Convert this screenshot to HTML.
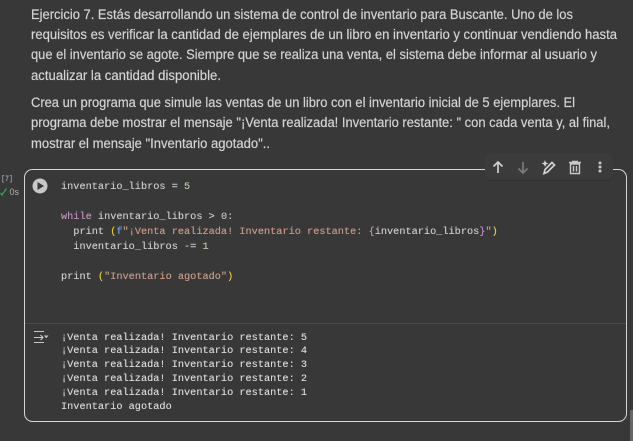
<!DOCTYPE html>
<html><head><meta charset="utf-8">
<style>
html,body{margin:0;padding:0;background:#383838;width:633px;height:441px;overflow:hidden}
svg{display:block}
.p{font-family:"Liberation Sans",sans-serif;font-size:13.4px;fill:#d4d4d4;stroke:#d4d4d4;stroke-width:.18px}
.m{font-family:"Liberation Mono",monospace;font-size:10.25px;fill:#d4d4d4;white-space:pre;stroke:currentColor;stroke-width:.12px;color:#c8c8c8}
.o{fill:#e4e4e4}
</style></head><body>
<svg width="633" height="441" viewBox="0 0 633 441" xmlns="http://www.w3.org/2000/svg">
<rect width="633" height="441" fill="#383838"/>
<text class="p" x="31" y="19" textLength="542" lengthAdjust="spacingAndGlyphs">Ejercicio 7. Estás desarrollando un sistema de control de inventario para Buscante. Uno de los</text>
<text class="p" x="31" y="39" textLength="586" lengthAdjust="spacingAndGlyphs">requisitos es verificar la cantidad de ejemplares de un libro en inventario y continuar vendiendo hasta</text>
<text class="p" x="31" y="59" textLength="566" lengthAdjust="spacingAndGlyphs">que el inventario se agote. Siempre que se realiza una venta, el sistema debe informar al usuario y</text>
<text class="p" x="31" y="80" textLength="190" lengthAdjust="spacingAndGlyphs">actualizar la cantidad disponible.</text>
<text class="p" x="31" y="107" textLength="544" lengthAdjust="spacingAndGlyphs">Crea un programa que simule las ventas de un libro con el inventario inicial de 5 ejemplares. El</text>
<text class="p" x="31" y="127" textLength="579" lengthAdjust="spacingAndGlyphs">programa debe mostrar el mensaje "¡Venta realizada! Inventario restante: " con cada venta y, al final,</text>
<text class="p" x="31" y="148" textLength="239" lengthAdjust="spacingAndGlyphs">mostrar el mensaje "Inventario agotado"..</text>

<rect x="24.5" y="169.5" width="602" height="252" rx="8" fill="none" stroke="#d6d6d6" stroke-width="1"/>
<line x1="25" y1="323.5" x2="626" y2="323.5" stroke="#4a4a4a"/>

<text x="1" y="181" font-family="Liberation Mono,monospace" font-size="8.5" fill="#9a9a9a" font-weight="bold" textLength="12" lengthAdjust="spacingAndGlyphs">[7]</text>
<path d="M0.5 193 L2 195 L6.5 188.5" fill="none" stroke="#22b14c" stroke-width="1.2"/>
<text x="9.5" y="195" font-family="Liberation Sans,sans-serif" font-size="9" fill="#b0b0b0">0s</text>

<circle cx="40" cy="186" r="7.5" fill="#c8c8c8"/>
<path d="M37.5 182 L44 186 L37.5 190 Z" fill="#383838"/>

<text class="m" y="189"><tspan x="61">inventario_libros = </tspan><tspan fill="#b5cea8">5</tspan></text>
<text class="m" y="219"><tspan x="61" fill="#c586c0">while</tspan><tspan> inventario_libros &gt; </tspan><tspan fill="#b5cea8">0</tspan><tspan>:</tspan></text>
<text class="m" y="234"><tspan x="73.3">print </tspan><tspan fill="#ffd700">(</tspan><tspan fill="#569cd6">f</tspan><tspan fill="#ce9178">"¡Venta realizada! Inventario restante: </tspan><tspan fill="#da70d6">{</tspan><tspan>inventario_libros</tspan><tspan fill="#da70d6">}</tspan><tspan fill="#ce9178">"</tspan><tspan fill="#ffd700">)</tspan></text>
<text class="m" y="249"><tspan x="73.3">inventario_libros -= </tspan><tspan fill="#b5cea8">1</tspan></text>
<text class="m" y="279"><tspan x="61">print </tspan><tspan fill="#ffd700">(</tspan><tspan fill="#ce9178">"Inventario agotado"</tspan><tspan fill="#ffd700">)</tspan></text>

<g fill="none" stroke="#c8c8c8" stroke-width="1.1">
<path d="M34 331.5H44M34 342.5H44M34 337.5H43M40.5 335L43 337.5L40.5 340"/>
</g>
<path d="M44 335.5H48.5L46.2 338.2Z" fill="#c8c8c8"/>
<text class="m o" y="340" x="61">¡Venta realizada! Inventario restante: 5</text>
<text class="m o" y="353" x="61">¡Venta realizada! Inventario restante: 4</text>
<text class="m o" y="367" x="61">¡Venta realizada! Inventario restante: 3</text>
<text class="m o" y="381" x="61">¡Venta realizada! Inventario restante: 2</text>
<text class="m o" y="395" x="61">¡Venta realizada! Inventario restante: 1</text>
<text class="m o" y="409" x="61">Inventario agotado</text>

<rect x="485" y="154" width="128" height="27" rx="7" fill="#303030"/>
<rect x="485" y="153" width="128" height="27" rx="7" fill="#3b3b3b"/>
<path d="M498 173V162M493.5 166.5L498 162L502.5 166.5" fill="none" stroke="#d0d0d0" stroke-width="1.7"/>
<path d="M523 162V173M518.5 168.5L523 173L527.5 168.5" fill="none" stroke="#7a7a7a" stroke-width="1.7"/>
<path d="M544 173.5L545 169.5L552 162.5L554.5 165L547.5 172Z" fill="none" stroke="#d0d0d0" stroke-width="1.7"/>
<path d="M545 160L546 162.5L548.5 163.5L546 164.5L545 167L544 164.5L541.5 163.5L544 162.5Z" fill="#d0d0d0"/>
<path d="M570.5 164H579.5V173.5H570.5ZM569 162.5H581M572 161.5H578M573.5 166V171.5M576.5 166V171.5" fill="none" stroke="#c8c8c8" stroke-width="1.4"/>
<circle cx="600" cy="163" r="1.5" fill="#c8c8c8"/><circle cx="600" cy="167" r="1.5" fill="#c8c8c8"/><circle cx="600" cy="171" r="1.5" fill="#c8c8c8"/>

<rect x="630" y="410" width="3" height="31" fill="#666"/>
</svg>
</body></html>
